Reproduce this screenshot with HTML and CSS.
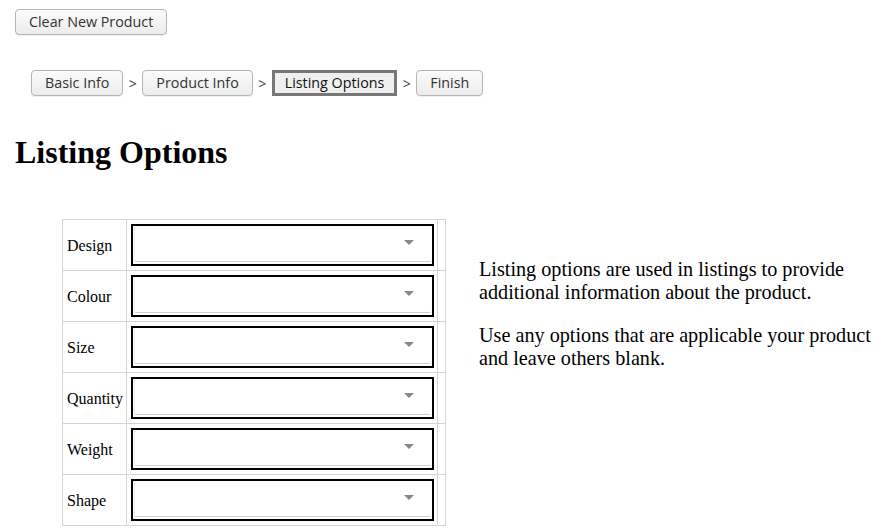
FILE: index.html
```html
<!DOCTYPE html>
<html>
<head>
<meta charset="utf-8">
<link rel="stylesheet" href="styles.css">
</head>
<body>
<div class="page">
  <div class="top-bar">
    <button class="btn">Clear New Product</button>
  </div>
  <nav class="steps">
    <button class="btn">Basic Info</button>
    <span class="sep">&gt;</span>
    <button class="btn">Product Info</button>
    <span class="sep">&gt;</span>
    <button class="btn current">Listing Options</button>
    <span class="sep">&gt;</span>
    <button class="btn">Finish</button>
  </nav>
  <h1 class="title">Listing Options</h1>
  <div class="content">
    <table class="options">
      <tr><td class="label">Design</td><td class="field"><div class="select"><div class="select-inner"><span class="caret"></span></div></div></td><td class="extra"></td></tr>
      <tr><td class="label">Colour</td><td class="field"><div class="select"><div class="select-inner"><span class="caret"></span></div></div></td><td class="extra"></td></tr>
      <tr><td class="label">Size</td><td class="field"><div class="select"><div class="select-inner"><span class="caret"></span></div></div></td><td class="extra"></td></tr>
      <tr><td class="label">Quantity</td><td class="field"><div class="select"><div class="select-inner"><span class="caret"></span></div></div></td><td class="extra"></td></tr>
      <tr><td class="label">Weight</td><td class="field"><div class="select"><div class="select-inner"><span class="caret"></span></div></div></td><td class="extra"></td></tr>
      <tr><td class="label">Shape</td><td class="field"><div class="select"><div class="select-inner"><span class="caret"></span></div></div></td><td class="extra"></td></tr>
    </table>
    <div class="help">
      <p>Listing options are used in listings to provide additional information about the product.</p>
      <p>Use any options that are applicable your product and leave others blank.</p>
    </div>
  </div>
</div>
</body>
</html>
```

FILE: styles.css
```css
html, body {
  margin: 0;
  padding: 0;
  background: #fff;
}
body {
  font-family: "Liberation Serif", "Times New Roman", serif;
  color: #000;
  overflow: hidden;
  height: 528px;
}
.page {
  padding: 9px 0 0 15px;
}
.btn {
  font-family: "Open Sans", "DejaVu Sans", sans-serif;
  font-size: 14.3px;
  color: #333;
  height: 26px;
  padding: 0 13px;
  border: 1px solid #b5b5b5;
  border-radius: 4px;
  background: linear-gradient(#fbfbfb, #ececec);
  box-shadow: 0 1px 0 rgba(0,0,0,0.06);
  line-height: 24px;
  margin: 0;
}
.top-bar {
  display: flex;
}
.steps {
  display: flex;
  align-items: center;
  margin: 35px 0 0 16px;
}
.sep {
  font-family: "Open Sans", "DejaVu Sans", sans-serif;
  font-size: 14px;
  color: #444;
  width: 19px;
  text-align: center;
}
.btn.current {
  border: 3px solid #777;
  border-radius: 0;
  background: #efefef;
  box-shadow: none;
  padding: 0 10px;
  color: #111;
  line-height: 20px;
}
.title {
  font-size: 32px;
  font-weight: bold;
  margin: 38px 0 0 0;
  line-height: 37px;
}
.content {
  display: flex;
  align-items: flex-start;
  margin: 48px 0 0 47px;
}
.options {
  border-collapse: collapse;
  flex: none;
}
.options td {
  border: 1px solid #d4d4d4;
  padding: 0;
}
.options td.label {
  font-size: 16px;
  padding: 2px 3px 0 4px;
  vertical-align: middle;
}
.options td.field {
  padding: 4px 3px 4px 4px;
}
.options td.extra {
  width: 7px;
}
.select {
  width: 299px;
  height: 38px;
  border: 2px solid #000;
  background: #fff;
}
.select-inner {
  position: relative;
  height: 35px;
  margin: 0 1px 0 1px;
  border-bottom: 1px solid #d0d0d0;
  border-left: 1px solid #ececec;
  border-radius: 0 0 2px 2px;
}
.caret {
  position: absolute;
  right: 17px;
  top: 14px;
  width: 0;
  height: 0;
  border-left: 5px solid transparent;
  border-right: 5px solid transparent;
  border-top: 5px solid #888;
}
.help {
  margin-left: 33px;
  margin-top: 39px;
  font-size: 20.2px;
  line-height: 23px;
  width: 400px;
}
.help p {
  margin: 0 0 20px 0;
}
```
